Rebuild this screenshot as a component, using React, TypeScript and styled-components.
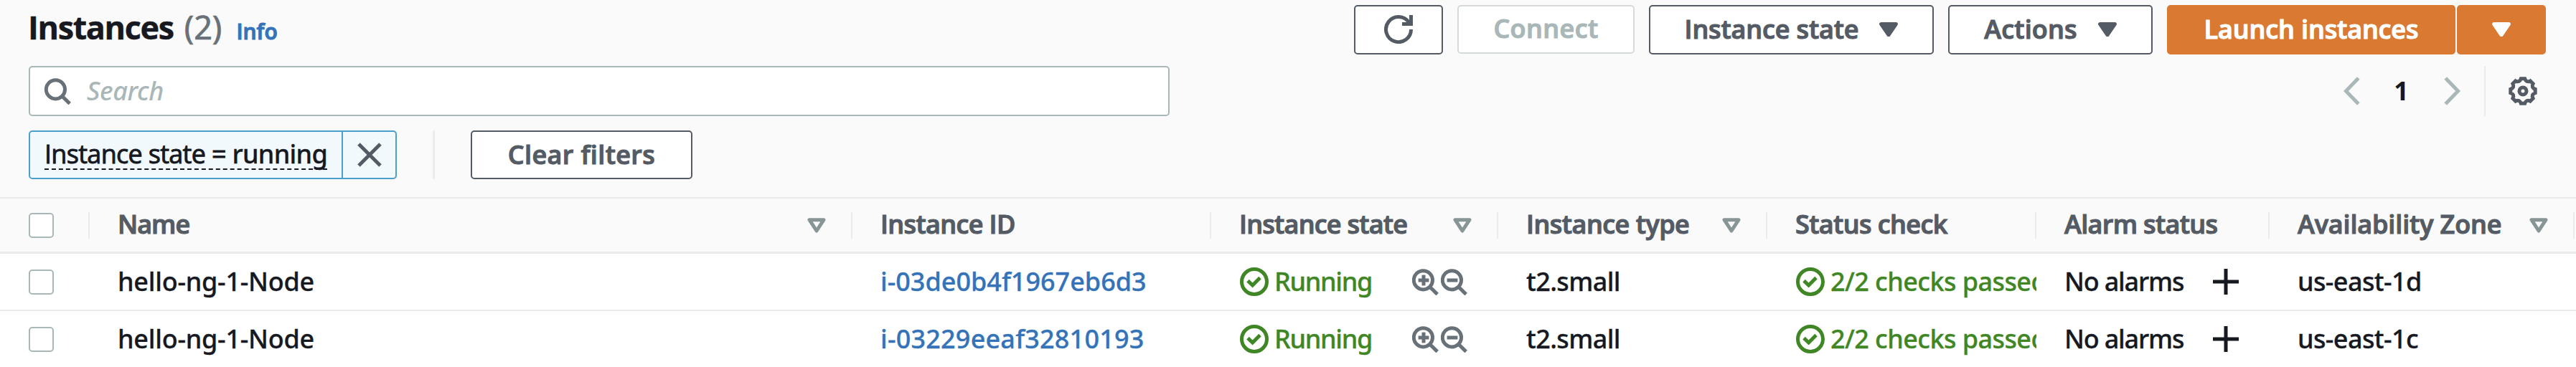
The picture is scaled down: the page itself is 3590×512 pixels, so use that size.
import React from 'react';
import styled, { createGlobalStyle, css } from 'styled-components';

const color = {
  text: '#16191f',
  muted: '#545b64',
  secondary: '#687078',
  disabled: '#aab7b8',
  sort: '#879596',
  line: '#ebebeb',
  link: '#3573b9',
  ok: '#3f8624',
  orange: '#d97932',
};

const sans = '"Noto Sans", "Open Sans", sans-serif';
const head = '"Open Sans", "Noto Sans", sans-serif';

const GlobalStyle = createGlobalStyle`
  *, *::before, *::after { box-sizing: border-box; }
  body {
    margin: 0;
    background: #fff;
    color: ${color.text};
    font: 500 36px/50px ${sans};
    white-space: nowrap;
  }
  svg { display: block; flex: none; }
`;

/* ---------- icons ---------- */

const Glyph = styled.svg<{ $c?: string }>`
  fill: none;
  stroke: ${p => p.$c ?? 'currentColor'};
  stroke-width: 5;
`;

const RefreshIcon = () => (
  <Glyph width="40" height="40" viewBox="0 0 40 40">
    <path d="M37.5 20A17.5 17.5 0 1 1 34.6 10.4" />
    <path d="M37.5 0V12.4H25" />
  </Glyph>
);

const CaretIcon = () => (
  <Glyph width="26" height="20" viewBox="0 0 26 20" strokeLinejoin="round">
    <path fill="currentColor" d="M2.6 2.5H23.4L13 17.8Z" />
  </Glyph>
);

const SortIcon = () => (
  <Glyph width="26" height="21" viewBox="0 0 26 21" strokeLinejoin="round" $c={color.sort}>
    <path d="M3 2.7H23L13 18Z" />
  </Glyph>
);

const LensIcon = ({ sign }: { sign?: 'plus' | 'minus' }) => (
  <Glyph width="37" height="37" viewBox="0 0 37 37" $c={color.secondary}>
    <circle cx="15.4" cy="15.8" r="13.1" />
    <path d="M24.4 25 35.2 35.6" />
    {sign && <path d="M8.6 16H23.4" />}
    {sign === 'plus' && <path d="M16 8.6V23.4" />}
  </Glyph>
);

const CheckIcon = () => (
  <Glyph width="40" height="40" viewBox="0 0 40 40">
    <circle cx="20" cy="20" r="17.5" />
    <path d="M11 18.6 17.6 25 28 14.6" />
  </Glyph>
);

const CloseIcon = () => (
  <Glyph width="34" height="34" viewBox="0 0 34 34" $c={color.muted}>
    <path d="M2 2 32 32M32 2 2 32" />
  </Glyph>
);

const PlusIcon = () => (
  <Glyph width="36" height="36" viewBox="0 0 36 36">
    <path d="M0 18H36M18 0V36" />
  </Glyph>
);

const ChevronIcon = ({ dir }: { dir: 'left' | 'right' }) => (
  <Glyph width="23" height="40" viewBox="0 0 23 40" $c={color.disabled}>
    <path d={dir === 'left' ? 'M20.8 2 3.4 20 20.8 38' : 'M2.2 2 19.6 20 2.2 38'} />
  </Glyph>
);

const polar = (deg: number, r: number) => {
  const a = (deg * Math.PI) / 180;
  return `${(20 + r * Math.cos(a)).toFixed(2)} ${(20 + r * Math.sin(a)).toFixed(2)}`;
};

const gearPath =
  Array.from({ length: 8 }, (_, i) => {
    const a = i * 45;
    return `${i ? 'L' : 'M'}${polar(a - 9, 17.4)}L${polar(a + 9, 17.4)}Q${polar(a + 22.5, 12.2)} ${polar(a + 36, 17.4)}`;
  }).join('') + 'Z';

const GearIcon = () => (
  <Glyph width="40" height="40" viewBox="0 0 40 40" $c={color.muted}>
    <path d={gearPath} />
    <circle cx="20" cy="20" r="5" />
  </Glyph>
);

/* ---------- text ---------- */

const Label = styled.span<{ $track?: number }>`
  font-family: ${head};
  font-weight: 600;
  -webkit-text-stroke: 1.1px currentColor;
  letter-spacing: ${p => p.$track ?? 0}px;
`;

const Plain = styled.span<{ $track?: number }>`
  -webkit-text-stroke: 0.3px currentColor;
  letter-spacing: ${p => p.$track ?? 0}px;
`;

/* ---------- header ---------- */

const Panel = styled.section`
  display: flex;
  flex-direction: column;
  width: 3590px;
  height: 275px;
  background: #fafafa;
`;

const TitleBar = styled.header`
  display: flex;
  justify-content: space-between;
  align-items: flex-start;
  height: 92px;
  padding: 7px 42px 0 39px;
`;

const Heading = styled.div`
  display: flex;
  align-items: baseline;
  height: 62px;
  line-height: 62px;
`;

const Title = styled.h1`
  margin: 0;
  font: 700 45px/62px ${head};
  -webkit-text-stroke: 0.4px currentColor;
  letter-spacing: -1.4px;
`;

const Count = styled.span`
  margin-left: 15px;
  font-size: 45px;
  font-weight: 400;
  -webkit-text-stroke: 0.7px currentColor;
  color: ${color.secondary};
`;

const InfoLink = styled.a`
  margin-left: 20px;
  font: 600 30px/62px ${head};
  -webkit-text-stroke: 1.1px currentColor;
  color: ${color.link};
`;

const Actions = styled.div`
  display: flex;
  gap: 20px;
`;

const SplitButton = styled.div`
  display: flex;
  gap: 2px;
`;

const Button = styled.button<{ $w: number; $kind?: 'primary' | 'disabled' }>`
  display: flex;
  align-items: center;
  justify-content: center;
  gap: 29px;
  width: ${p => p.$w}px;
  height: 69px;
  padding: 0 0 2px;
  border: 2px solid ${color.muted};
  border-radius: 5px;
  background: #fff;
  color: ${color.muted};
  font: inherit;
  ${p =>
    p.$kind === 'primary' &&
    css`
      border-color: ${color.orange};
      background: ${color.orange};
      color: #fff;
    `}
  ${p =>
    p.$kind === 'disabled' &&
    css`
      height: 68px;
      border-color: #d5dbdb;
      color: ${color.disabled};
    `}
`;

const ClearButton = styled(Button)`
  height: 68px;
  padding-bottom: 1px;
`;

/* ---------- search and filters ---------- */

const SearchBar = styled.div`
  display: flex;
  justify-content: space-between;
  height: 70px;
  padding: 0 54px 0 40px;
`;

const SearchBox = styled.div`
  display: flex;
  align-items: center;
  gap: 22px;
  width: 1590px;
  padding-left: 20px;
  border: 2px solid ${color.disabled};
  border-radius: 5px;
  background: #fff;
`;

const Placeholder = styled.span`
  color: ${color.disabled};
  font-style: italic;
  letter-spacing: -0.4px;
`;

const Pager = styled.nav`
  display: flex;
  align-items: center;
`;

const PageNumber = styled.span`
  width: 117px;
  padding-right: 2px;
  text-align: center;
  font-family: ${head};
  font-weight: 700;
`;

const Rule = styled.i<{ $h: number; $w?: number }>`
  flex: none;
  width: ${p => p.$w ?? 2}px;
  height: ${p => p.$h}px;
  background: ${color.line};
`;

const PagerRule = styled(Rule)`
  margin: 0 32px 0 33px;
`;

const Filters = styled.div`
  display: flex;
  height: 68px;
  margin-top: 20px;
  padding-left: 40px;
`;

const Chip = styled.div`
  display: flex;
  width: 513px;
  border: 2px solid #4a9fcb;
  border-radius: 5px;
  background: #f2f9fd;
`;

const ChipText = styled.div`
  flex: 1;
  padding: 11px 0 0 20px;
`;

const ChipUnderline = styled.div`
  width: 394px;
  height: 42px;
  border-bottom: 2px dashed ${color.text};
  line-height: 40px;
  letter-spacing: -0.7px;
  -webkit-text-stroke: 0.3px currentColor;
`;

const ChipKey = styled.span`
  font-family: ${head};
  -webkit-text-stroke: 0.9px currentColor;
`;

const ChipClose = styled.button`
  display: flex;
  align-items: center;
  justify-content: center;
  width: 75px;
  padding: 0;
  border: 0;
  border-left: 2px solid #4a9fcb;
  background: none;
`;

const FilterRule = styled(Rule)`
  margin: 0 50px;
`;

/* ---------- table ---------- */

const columns = '125px 1063px 500px 400px 375px 375px 325px 425px';

const HeadRow = styled.div`
  display: grid;
  grid-template-columns: ${columns};
  height: 79px;
  border-top: 2px solid ${color.line};
  border-bottom: 3px solid ${color.line};
  background: #fafafa;
`;

const HeadCell = styled.div`
  display: flex;
  align-items: center;
  justify-content: space-between;
  padding-left: 39px;
  color: ${color.muted};
`;

const HeadCheckCell = styled(HeadCell)`
  padding-left: 40px;
`;

const HeadEnd = styled.div`
  display: flex;
  align-items: center;
  gap: 35px;
`;

const HeadLabel = styled(Label)`
  padding-bottom: 2px;
`;

const BodyRow = styled.div`
  display: grid;
  grid-template-columns: ${columns};
  height: 80px;
  border-bottom: 2px solid ${color.line};
  background: #fff;

  &:last-child {
    height: 78px;
    border-bottom: 0;
  }
`;

const Cell = styled.div<{ $tone?: string }>`
  display: flex;
  align-items: center;
  min-width: 0;
  overflow: hidden;
  padding-left: 39px;
  color: ${p => p.$tone ?? 'inherit'};
`;

const SpreadCell = styled(Cell)`
  justify-content: space-between;
  padding-right: 43px;
`;

const CheckCell = styled(Cell)`
  padding: 1px 0 0 40px;
`;

const Checkbox = styled.span`
  width: 35px;
  height: 35px;
  border: 2px solid ${color.disabled};
  border-radius: 5px;
  background: #fff;
`;

const Status = styled.span`
  display: flex;
  align-items: center;
  gap: 8px;
  padding: 0 0 1px 1px;
  color: ${color.ok};
`;

const LensPair = styled.span`
  display: flex;
  gap: 3px;
`;

const heads: { label: string; track: number; sort?: boolean }[] = [
  { label: 'Name', track: -1, sort: true },
  { label: 'Instance ID', track: -0.64 },
  { label: 'Instance state', track: -0.77, sort: true },
  { label: 'Instance type', track: -0.52, sort: true },
  { label: 'Status check', track: -0.6 },
  { label: 'Alarm status', track: -0.65 },
  { label: 'Availability Zone', track: -0.13, sort: true },
];

const rows = [
  { id: 'i-03de0b4f1967eb6d3', zone: 'us-east-1d', idTrack: 0 },
  { id: 'i-03229eeaf32810193', zone: 'us-east-1c', idTrack: 0.2 },
];

export default function App() {
  return (
    <>
      <GlobalStyle />
      <Panel>
        <TitleBar>
          <Heading>
            <Title>Instances</Title>
            <Count>(2)</Count>
            <InfoLink>Info</InfoLink>
          </Heading>
          <Actions>
            <Button $w={124}><RefreshIcon /></Button>
            <Button $w={247} $kind="disabled"><Label $track={0.4}>Connect</Label></Button>
            <Button $w={397}><Label $track={-0.15}>Instance state</Label><CaretIcon /></Button>
            <Button $w={285}><Label $track={0.15}>Actions</Label><CaretIcon /></Button>
            <SplitButton>
              <Button $w={402} $kind="primary"><Label $track={-0.13}>Launch instances</Label></Button>
              <Button $w={124} $kind="primary"><CaretIcon /></Button>
            </SplitButton>
          </Actions>
        </TitleBar>
        <SearchBar>
          <SearchBox>
            <LensIcon />
            <Placeholder>Search</Placeholder>
          </SearchBox>
          <Pager>
            <ChevronIcon dir="left" />
            <PageNumber>1</PageNumber>
            <ChevronIcon dir="right" />
            <PagerRule $h={70} />
            <GearIcon />
          </Pager>
        </SearchBar>
        <Filters>
          <Chip>
            <ChipText>
              <ChipUnderline><ChipKey>Instance state = </ChipKey>running</ChipUnderline>
            </ChipText>
            <ChipClose><CloseIcon /></ChipClose>
          </Chip>
          <FilterRule $h={68} $w={3} />
          <ClearButton $w={309}><Label $track={0.37}>Clear filters</Label></ClearButton>
        </Filters>
      </Panel>
      <HeadRow>
        <HeadCheckCell>
          <Checkbox />
          <Rule $h={37} />
        </HeadCheckCell>
        {heads.map(h => (
          <HeadCell key={h.label}>
            <HeadLabel $track={h.track}>{h.label}</HeadLabel>
            <HeadEnd>
              {h.sort && <SortIcon />}
              <Rule $h={37} />
            </HeadEnd>
          </HeadCell>
        ))}
      </HeadRow>
      {rows.map(r => (
        <BodyRow key={r.id}>
          <CheckCell><Checkbox /></CheckCell>
          <Cell><Plain $track={-0.25}>hello-ng-1-Node</Plain></Cell>
          <Cell $tone={color.link}><Plain $track={r.idTrack}>{r.id}</Plain></Cell>
          <SpreadCell>
            <Status><CheckIcon /><Plain $track={-1.3}>Running</Plain></Status>
            <LensPair><LensIcon sign="plus" /><LensIcon sign="minus" /></LensPair>
          </SpreadCell>
          <Cell><Plain $track={-0.6}>t2.small</Plain></Cell>
          <Cell>
            <Status><CheckIcon /><Plain $track={-0.57}>2/2 checks passed</Plain></Status>
          </Cell>
          <SpreadCell><Plain $track={-1.2}>No alarms</Plain><PlusIcon /></SpreadCell>
          <Cell><Plain $track={-0.6}>{r.zone}</Plain></Cell>
        </BodyRow>
      ))}
    </>
  );
}
